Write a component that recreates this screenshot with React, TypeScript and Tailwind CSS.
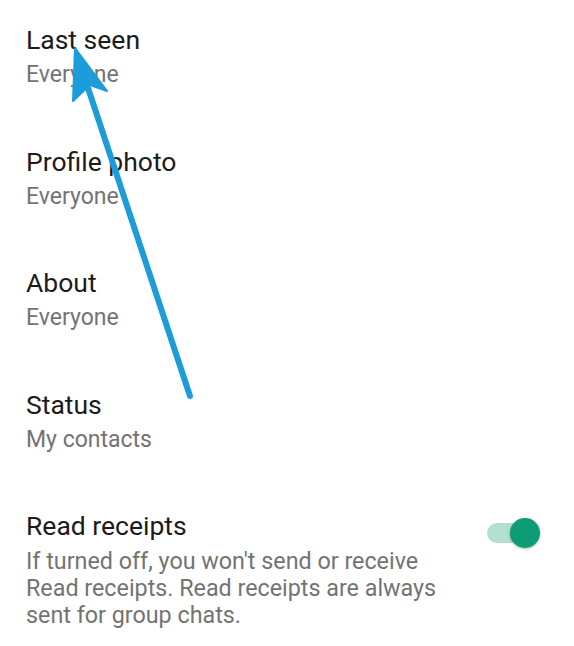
const rows = [
  { title: 'Last seen', value: 'Everyone' },
  { title: 'Profile photo', value: 'Everyone' },
  { title: 'About', value: 'Everyone' },
  { title: 'Status', value: 'My contacts' },
]

const Arrow = () => (
  <svg className="absolute left-0 top-0 pointer-events-none" width="574" height="646" viewBox="0 0 574 646">
    <line x1="88" y1="88" x2="190" y2="396" stroke="#1c9cd8" strokeWidth="6" strokeLinecap="round" />
    <polygon points="75,48 107,91 90,85 73,101" fill="#1c9cd8" stroke="#1c9cd8" strokeWidth="2" strokeLinejoin="round" />
  </svg>
)

export default function App() {
  return (
    <div className="relative w-[574px] h-[646px] bg-white overflow-hidden" style={{ fontFamily: 'Roboto, "Noto Sans", sans-serif' }}>
      <div className="flex flex-col gap-[55.5px] pt-[24px] pl-[26px]">
        {rows.map((r) => (
          <div key={r.title}>
            <div className="text-[26.5px] leading-[32px] text-[#1b1b1b]">{r.title}</div>
            <div className="mt-[4px] text-[23px] leading-[30px] text-[#737373]">{r.value}</div>
          </div>
        ))}
      </div>

      {/* Read receipts */}
      <div className="flex items-start justify-between pl-[26px] pr-[34px] mt-[55.5px]">
        <div>
          <div className="text-[26.5px] leading-[32px] text-[#1b1b1b]">Read receipts</div>
          <div className="mt-[6px] w-[430px] text-[23.3px] leading-[27px] text-[#737373]">
            If turned off, you won't send or receive Read receipts. Read receipts are always sent for group chats.
          </div>
        </div>
        <div className="relative mt-[8px] w-[53px] h-[30px]">
          <div className="absolute left-0 top-[5px] w-[44px] h-[20px] rounded-full bg-[#b3e0d1]" />
          <div className="absolute right-0 top-0 w-[30px] h-[30px] rounded-full bg-[#0e9c77] shadow-[0_1px_3px_rgba(0,0,0,0.3)]" />
        </div>
      </div>

      <Arrow />
    </div>
  )
}
